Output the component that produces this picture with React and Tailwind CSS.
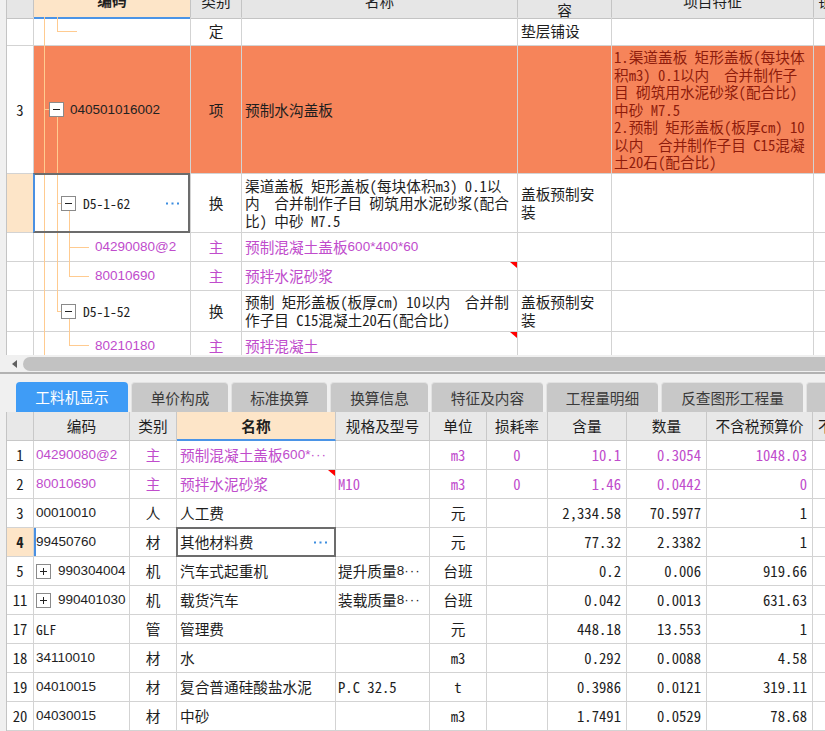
import React from "react";

const LINE = "#ffcb90";

function V({ x, y1, y2 }) {
  return <line x1={x + 0.5} x2={x + 0.5} y1={y1} y2={y2} stroke={LINE} strokeWidth="1" />;
}
function H({ y, x1, x2 }) {
  return <line x1={x1} x2={x2} y1={y + 0.5} y2={y + 0.5} stroke={LINE} strokeWidth="1" />;
}
function Box({ x, y, plus }) {
  return (
    <g>
      <rect x={x + 0.5} y={y + 0.5} width="14" height="14" fill="#fff" stroke="#8a8a8a" />
      <line x1={x + 4} x2={x + 11} y1={y + 7.5} y2={y + 7.5} stroke="#222" />
      {plus && <line x1={x + 7.5} x2={x + 7.5} y1={y + 4} y2={y + 11} stroke="#222" />}
    </g>
  );
}
function Tree({ h, children }) {
  return (
    <svg className="absolute left-0 top-0 pointer-events-none" width="60" height={h}>
      {children}
    </svg>
  );
}
function Dots({ className }) {
  return (
    <svg width="14" height="3" className={className}>
      <rect x="0" y="0.5" width="2" height="2" fill="#3c8de0" />
      <rect x="5.5" y="0.5" width="2" height="2" fill="#3c8de0" />
      <rect x="11" y="0.5" width="2" height="2" fill="#3c8de0" />
    </svg>
  );
}
function RedTri() {
  return <div className="absolute top-0 right-0 w-0 h-0 border-l-[7px] border-l-transparent border-t-[6px] border-t-[#ff0000]" />;
}
function Ell() {
  return <span className="font-['Liberation_Sans',sans-serif] text-[13.5px] tracking-[1px]">···</span>;
}

const TC = "grid grid-cols-[27px_157px_51px_276px_94px_202px_100px]";
const CELL = "border-r border-b border-[#d3d3d3]";
const SANS = "font-['Liberation_Sans','Noto_Sans_CJK_SC',sans-serif] text-[13.5px]";
const PURPLE = "text-[#c04ccc]";
const ORANGE = "bg-[#f6845a]";

function Lines({ lines, className }) {
  return (
    <div className={`flex flex-col justify-center leading-[17.6px] ${className}`}>
      {lines.map((l, i) => (
        <div key={i} className="whitespace-pre">{l}</div>
      ))}
    </div>
  );
}

function TopGrid() {
  return (
    <div className="h-[355px] overflow-hidden ml-[6px] border-l border-[#c4c4c4] bg-white">
      {/* header (scrolled, top half hidden) */}
      <div className={`${TC} h-[34px] -mt-[17px]`}>
        <div className="bg-[#e6e6e6] border-r border-b border-[#c4c4c4]" />
        <div className="bg-[#fde5c8] border-r border-[#c4c4c4] border-b-2 border-b-[#4b94e6] flex items-center justify-center font-bold">编码</div>
        <div className="bg-[#e6e6e6] border-r border-b border-[#c4c4c4] flex items-center justify-center">类别</div>
        <div className="bg-[#e6e6e6] border-r border-b border-[#c4c4c4] flex items-center justify-center">名称</div>
        <Lines lines={["工作内", "容"]} className="bg-[#e6e6e6] border-r border-b border-[#c4c4c4] items-center" />
        <div className="bg-[#e6e6e6] border-r border-b border-[#c4c4c4] flex items-center justify-center">项目特征</div>
        <div className="bg-[#e6e6e6] border-r border-b border-[#c4c4c4] flex items-center pl-[4px] whitespace-nowrap">锁定综合单价</div>
      </div>

      {/* row 定 */}
      <div className={`${TC} h-[29px]`}>
        <div className={CELL} />
        <div className={`${CELL} relative`}>
          <Tree h={29}>
            <V x={10} y1={0} y2={29} />
            <V x={23} y1={0} y2={14} />
            <H y={14} x1={23} x2={43} />
          </Tree>
        </div>
        <div className={`${CELL} flex items-center justify-center`}>定</div>
        <div className={CELL} />
        <div className={`${CELL} flex items-center pl-[3px]`}>垫层铺设</div>
        <div className={CELL} />
        <div className={CELL} />
      </div>

      {/* row 3 */}
      <div className={`${TC} h-[128px]`}>
        <div className={`${CELL} flex items-center justify-center`}>3</div>
        <div className={`${CELL} ${ORANGE} relative flex items-center`}>
          <Tree h={128}>
            <V x={10} y1={0} y2={128} />
            <H y={63} x1={10} x2={15} />
            <V x={23} y1={71} y2={128} />
            <Box x={15} y={56} />
          </Tree>
          <span className={`${SANS} pl-[36px] text-[#222]`}>040501016002</span>
        </div>
        <div className={`${CELL} ${ORANGE} flex items-center justify-center`}>项</div>
        <div className={`${CELL} ${ORANGE} flex items-center pl-[3px]`}>预制水沟盖板</div>
        <div className={`${CELL} ${ORANGE}`} />
        <Lines
          className={`${CELL} ${ORANGE} pl-[2px] text-[#8e1c0c]`}
          lines={[
            "1.渠道盖板 矩形盖板(每块体",
            "积m3) 0.1以内  合并制作子",
            "目 砌筑用水泥砂浆(配合比)",
            "中砂 M7.5",
            "2.预制 矩形盖板(板厚cm) 10",
            "以内  合并制作子目 C15混凝",
            "土20石(配合比)",
          ]}
        />
        <div className={`${CELL} ${ORANGE}`} />
      </div>

      {/* row D5-1-62 */}
      <div className={`${TC} h-[59px]`}>
        <div className={`${CELL} bg-[#fde5c8]`} />
        <div className={`${CELL} relative flex items-center`}>
          <Tree h={59}>
            <V x={10} y1={0} y2={59} />
            <V x={23} y1={0} y2={59} />
            <H y={29} x1={23} x2={27} />
            <V x={35} y1={37} y2={59} />
            <Box x={27} y={22} />
          </Tree>
          <span className="pl-[49px] text-[13.5px]">D5-1-62</span>
          <Dots className="ml-auto mr-[10px]" />
          <div className="absolute -top-px -left-px right-0 -bottom-px border-2 border-[#6c6c6c] border-l-[#4a90e2]" />
        </div>
        <div className={`${CELL} flex items-center justify-center`}>换</div>
        <Lines
          className={`${CELL} pl-[3px]`}
          lines={["渠道盖板 矩形盖板(每块体积m3) 0.1以", "内  合并制作子目 砌筑用水泥砂浆(配合", "比) 中砂 M7.5"]}
        />
        <Lines className={`${CELL} pl-[3px]`} lines={["盖板预制安", "装"]} />
        <div className={CELL} />
        <div className={CELL} />
      </div>

      {/* row 04290080@2 */}
      <div className={`${TC} h-[29px]`}>
        <div className={CELL} />
        <div className={`${CELL} relative flex items-center`}>
          <Tree h={29}>
            <V x={10} y1={0} y2={29} />
            <V x={23} y1={0} y2={29} />
            <V x={35} y1={0} y2={29} />
            <H y={14} x1={35} x2={55} />
          </Tree>
          <span className={`${SANS} ${PURPLE} pl-[61px]`}>04290080@2</span>
        </div>
        <div className={`${CELL} ${PURPLE} flex items-center justify-center`}>主</div>
        <div className={`${CELL} ${PURPLE} flex items-center pl-[3px] whitespace-nowrap`}>
          预制混凝土盖板<span className={SANS}>600*400*60</span>
        </div>
        <div className={CELL} />
        <div className={CELL} />
        <div className={CELL} />
      </div>

      {/* row 80010690 */}
      <div className={`${TC} h-[29px]`}>
        <div className={CELL} />
        <div className={`${CELL} relative flex items-center`}>
          <Tree h={29}>
            <V x={10} y1={0} y2={29} />
            <V x={23} y1={0} y2={29} />
            <V x={35} y1={0} y2={14} />
            <H y={14} x1={35} x2={55} />
          </Tree>
          <span className={`${SANS} ${PURPLE} pl-[61px]`}>80010690</span>
        </div>
        <div className={`${CELL} ${PURPLE} flex items-center justify-center`}>主</div>
        <div className={`${CELL} ${PURPLE} relative flex items-center pl-[3px]`}>
          预拌水泥砂浆
          <RedTri />
        </div>
        <div className={CELL} />
        <div className={CELL} />
        <div className={CELL} />
      </div>

      {/* row D5-1-52 */}
      <div className={`${TC} h-[41px]`}>
        <div className={CELL} />
        <div className={`${CELL} relative flex items-center`}>
          <Tree h={41}>
            <V x={10} y1={0} y2={41} />
            <V x={23} y1={0} y2={20} />
            <H y={20} x1={23} x2={27} />
            <V x={35} y1={28} y2={41} />
            <Box x={27} y={13} />
          </Tree>
          <span className="pl-[49px] text-[13.5px]">D5-1-52</span>
        </div>
        <div className={`${CELL} flex items-center justify-center`}>换</div>
        <Lines className={`${CELL} pl-[3px]`} lines={["预制 矩形盖板(板厚cm) 10以内  合并制", "作子目 C15混凝土20石(配合比)"]} />
        <Lines className={`${CELL} pl-[3px]`} lines={["盖板预制安", "装"]} />
        <div className={CELL} />
        <div className={CELL} />
      </div>

      {/* row 80210180 */}
      <div className={`${TC} h-[29px]`}>
        <div className={CELL} />
        <div className={`${CELL} relative flex items-center`}>
          <Tree h={29}>
            <V x={10} y1={0} y2={29} />
            <V x={35} y1={0} y2={13} />
            <H y={13} x1={35} x2={55} />
          </Tree>
          <span className={`${SANS} ${PURPLE} pl-[61px]`}>80210180</span>
        </div>
        <div className={`${CELL} ${PURPLE} flex items-center justify-center`}>主</div>
        <div className={`${CELL} ${PURPLE} relative flex items-center pl-[3px]`}>
          预拌混凝土
          <RedTri />
        </div>
        <div className={CELL} />
        <div className={CELL} />
        <div className={CELL} />
      </div>
    </div>
  );
}

function Scrollbar() {
  return (
    <div className="h-[17px] flex items-center pl-[7px] bg-[#f0f0f0]">
      <div className="w-[16px] h-[14px] flex items-center justify-center">
        <svg width="6" height="8" viewBox="0 0 6 8">
          <polygon points="5,0 5,8 0,4" fill="#606060" />
        </svg>
      </div>
      <div className="flex-1 h-[14px] rounded-l-full bg-[#c2c2c2]" />
    </div>
  );
}

const TABS = [
  { t: "工料机显示", w: "w-[112px]", active: true },
  { t: "单价构成", w: "w-[97px]" },
  { t: "标准换算", w: "w-[96px]" },
  { t: "换算信息", w: "w-[98px]" },
  { t: "特征及内容", w: "w-[112px]" },
  { t: "工程量明细", w: "w-[112px]" },
  { t: "反查图形工程量", w: "w-[142px]" },
  { t: "安装费用", w: "w-[100px]" },
];

function Tabs() {
  return (
    <div className="h-[30px] flex gap-[3px] pl-[16px] overflow-hidden">
      {TABS.map((tb, i) => (
        <div
          key={i}
          className={`${tb.w} shrink-0 h-[30px] rounded-t-[4px] flex items-center justify-center whitespace-nowrap ${
            tb.active ? "bg-[#3f9cf6] text-white" : "bg-[#c8c8c8] text-[#3a3a3a] border-t border-l border-[#e2e2e2]"
          }`}
        >
          {tb.t}
        </div>
      ))}
    </div>
  );
}

const BC = "grid grid-cols-[27px_96px_47px_159px_94px_57px_61px_79px_80px_106px_100px] h-[29px]";
const HC = "bg-[#e8e8e8] border-r border-b border-[#c8c8c8] flex items-center justify-center whitespace-nowrap";

const ROWS = [
  { n: "1", code: "04290080@2", t: "主", name: "预制混凝土盖板", nameTail: "600*", nameEll: true, spec: "", unit: "m3", loss: "0", qty: "10.1", num: "0.3054", price: "1048.03", purple: true },
  { n: "2", code: "80010690", t: "主", name: "预拌水泥砂浆", tri: true, spec: "M10", unit: "m3", loss: "0", qty: "1.46", num: "0.0442", price: "0", purple: true },
  { n: "3", code: "00010010", t: "人", name: "人工费", spec: "", unit: "元", loss: "", qty: "2,334.58", num: "70.5977", price: "1" },
  { n: "4", code: "99450760", t: "材", name: "其他材料费", spec: "", unit: "元", loss: "", qty: "77.32", num: "2.3382", price: "1", sel: true },
  { n: "5", code: "990304004", plus: true, t: "机", name: "汽车式起重机", spec: "提升质量", specTail: "8", unit: "台班", loss: "", qty: "0.2", num: "0.006", price: "919.66" },
  { n: "11", code: "990401030", plus: true, t: "机", name: "载货汽车", spec: "装载质量", specTail: "8", unit: "台班", loss: "", qty: "0.042", num: "0.0013", price: "631.63" },
  { n: "17", code: "GLF", mono: true, t: "管", name: "管理费", spec: "", unit: "元", loss: "", qty: "448.18", num: "13.553", price: "1" },
  { n: "18", code: "34110010", t: "材", name: "水", spec: "", unit: "m3", loss: "", qty: "0.292", num: "0.0088", price: "4.58" },
  { n: "19", code: "04010015", t: "材", name: "复合普通硅酸盐水泥", spec: "P.C 32.5", unit: "t", loss: "", qty: "0.3986", num: "0.0121", price: "319.11" },
  { n: "20", code: "04030015", t: "材", name: "中砂", spec: "", unit: "m3", loss: "", qty: "1.7491", num: "0.0529", price: "78.68" },
];

function BottomGrid() {
  return (
    <div className="ml-[6px] border-l border-[#c4c4c4] bg-white">
      <div className={BC}>
        <div className={HC} />
        <div className={HC}>编码</div>
        <div className={HC}>类别</div>
        <div className="bg-[#fde5c8] border-r border-[#c8c8c8] border-b-2 border-b-[#4b94e6] flex items-center justify-center font-bold">名称</div>
        <div className={HC}>规格及型号</div>
        <div className={HC}>单位</div>
        <div className={HC}>损耗率</div>
        <div className={HC}>含量</div>
        <div className={HC}>数量</div>
        <div className={HC}>不含税预算价</div>
        <div className="bg-[#e8e8e8] border-r border-b border-[#c8c8c8] flex items-center pl-[5px] whitespace-nowrap">不含税市场价</div>
      </div>
      {ROWS.map((r, i) => {
        const col = r.purple ? "text-[#c04ccc]" : "text-[#1e1e1e]";
        return (
          <div key={i} className={`${BC} ${col}`}>
            <div className={`${CELL} flex items-center justify-center text-[#1e1e1e] ${r.sel ? "bg-[#fde5c8] font-bold" : ""}`}>{r.n}</div>
            <div className={`${CELL} relative flex items-center pl-[2px] whitespace-nowrap`}>
              {r.sel && <div className="absolute left-0 top-0 bottom-0 w-[2px] bg-[#4a90e2]" />}
              {r.plus && (
                <svg width="16" height="15" className="mr-[6px] shrink-0">
                  <Box x={0} y={0} plus />
                </svg>
              )}
              <span className={r.mono ? "text-[13.5px]" : SANS}>{r.code}</span>
            </div>
            <div className={`${CELL} flex items-center justify-center`}>{r.t}</div>
            <div className={`${CELL} relative flex items-center pl-[3px] whitespace-nowrap`}>
              {r.name}
              {r.nameTail && <span className={SANS}>{r.nameTail}</span>}
              {r.nameEll && <Ell />}
              {r.tri && <RedTri />}
              {r.sel && (
                <>
                  <Dots className="ml-auto mr-[7px]" />
                  <div className="absolute -top-px -left-px -right-px -bottom-px border-2 border-[#6c6c6c]" />
                </>
              )}
            </div>
            <div className={`${CELL} flex items-center pl-[2px] whitespace-pre overflow-hidden`}>
              {r.spec}
              {r.specTail && (
                <>
                  <span className={SANS}>{r.specTail}</span>
                  <Ell />
                </>
              )}
            </div>
            <div className={`${CELL} flex items-center justify-center`}>{r.unit}</div>
            <div className={`${CELL} flex items-center justify-center`}>{r.loss}</div>
            <div className={`${CELL} flex items-center justify-end pr-[5px]`}>{r.qty}</div>
            <div className={`${CELL} flex items-center justify-end pr-[5px]`}>{r.num}</div>
            <div className={`${CELL} flex items-center justify-end pr-[5px]`}>{r.price}</div>
            <div className={CELL} />
          </div>
        );
      })}
    </div>
  );
}

export default function App() {
  return (
    <div className="w-[825px] h-[731px] overflow-hidden bg-[#f0f0f0] font-['Noto_Sans_Mono_CJK_SC','Noto_Sans_CJK_SC',monospace] text-[14.67px] leading-[18px] text-[#1e1e1e]">
      <TopGrid />
      <Scrollbar />
      <div className="h-[2px] bg-[#b2b2b2]" />
      <div className="h-[8px]" />
      <Tabs />
      <BottomGrid />
    </div>
  );
}
